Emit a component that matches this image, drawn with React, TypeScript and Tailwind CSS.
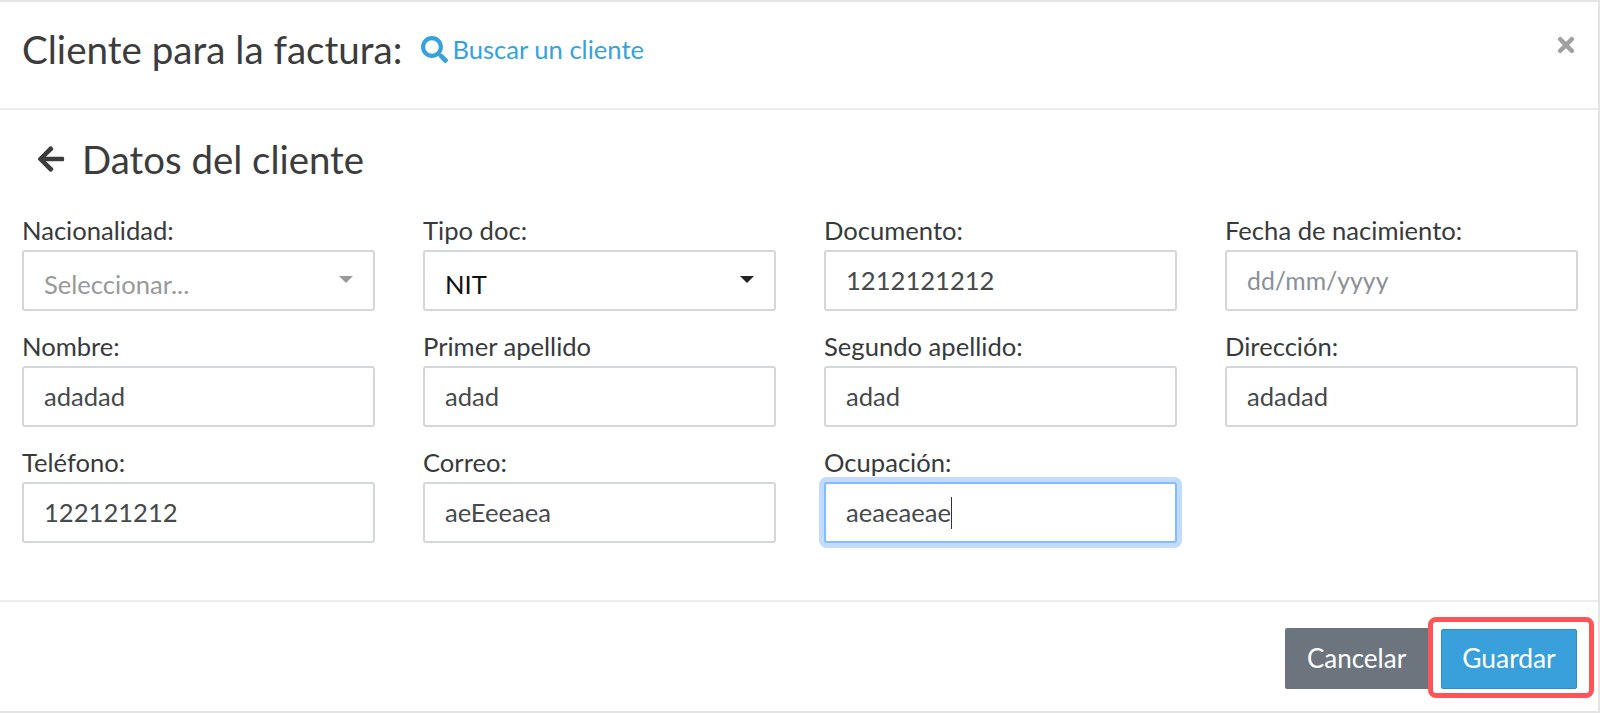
import React from "react";
import { FaSearch, FaArrowLeft, FaTimes } from "react-icons/fa";

function Label({ children }: { children: React.ReactNode }) {
  return <label className="block h-[30px] whitespace-nowrap text-[25.6px] leading-[20px] text-[#373a3c]">{children}</label>;
}

function Field({ label, value, placeholder, focused }: { label: string; value?: string; placeholder?: string; focused?: boolean }) {
  return (
    <div className="h-[116px]">
      <Label>{label}</Label>
      <div
        className={
          focused
            ? "flex h-[61px] items-center rounded-[3px] border-2 border-[#80bdff] bg-white pl-[20px] text-[25.6px] text-[#464a4c] shadow-[0_0_0_5px_#c2dbfe]"
            : "flex h-[61px] items-center rounded-[3px] border-2 border-[#d2d7dc] bg-white pl-[20px] text-[25.6px] text-[#464a4c]"
        }
      >
        {placeholder ? <span className="text-[24.8px] text-[#8a9097]">{placeholder}</span> : <span>{value}</span>}
        {focused ? <span className="h-[32px] w-[1px] bg-[#333]" /> : null}
      </div>
    </div>
  );
}

function SelectField({ label, value, muted }: { label: string; value: string; muted?: boolean }) {
  return (
    <div className="h-[116px]">
      <Label>{label}</Label>
      <div className="flex h-[61px] items-center justify-between rounded-[3px] border-2 border-[#d2d7dc] bg-white pl-[20px] pr-[20px]">
        <span className={muted ? "mt-[8px] text-[25.6px] text-[#999]" : "mt-[8px] text-[25.6px] text-[#111]"}>{value}</span>
        <svg width="14" height="7" viewBox="0 0 14 7" className="mb-[3px]">
          <path d="M0 0H14L7 7Z" fill={muted ? "#999" : "#222"} />
        </svg>
      </div>
    </div>
  );
}

export default function App() {
  return (
    <div className="flex h-[713px] w-[1600px] flex-col border-b-2 border-r-2 border-t-2 border-[#e4e4e4] bg-white font-['Lato','Liberation_Sans',sans-serif]">
      <header className="flex h-[108px] shrink-0 items-start justify-between border-b-2 border-[#e9ecef] pl-[22px] pr-[20px]">
        <div className="mt-[25px] flex items-center">
          <h1 className="text-[38.6px] font-normal leading-[44px] text-[#3c3c3c]">Cliente para la factura:</h1>
          <a className="ml-[19px] flex items-center text-[25.6px] leading-[30px] text-[#36a2dd]">
            <FaSearch className="mr-[4px] text-[27px]" />
            Buscar un cliente
          </a>
        </div>
        <FaTimes className="mt-[31px] text-[24px] text-[#a0a0a0]" />
      </header>

      <main className="h-[492px] shrink-0 border-b-2 border-[#ececec] pl-[22px] pr-[20px]">
        <div className="flex h-[101px] items-center pb-[3px] pl-[14px] text-[38.4px] leading-[44px] text-[#3c3c3c]">
          <FaArrowLeft className="mr-[16px] text-[30px]" />
          Datos del cliente
        </div>
        <div className="grid grid-cols-[353px_353px_353px_353px] gap-x-[48px] pt-[9px]">
          <SelectField label="Nacionalidad:" value="Seleccionar..." muted />
          <SelectField label="Tipo doc:" value="NIT" />
          <Field label="Documento:" value="1212121212" />
          <Field label="Fecha de nacimiento:" placeholder="dd/mm/yyyy" />
          <Field label="Nombre:" value="adadad" />
          <Field label="Primer apellido" value="adad" />
          <Field label="Segundo apellido:" value="adad" />
          <Field label="Dirección:" value="adadad" />
          <Field label="Teléfono:" value="122121212" />
          <Field label="Correo:" value="aeEeeaea" />
          <Field label="Ocupación:" value="aeaeaeae" focused />
        </div>
      </main>

      <footer className="flex flex-1 items-end justify-end pb-[13px] pr-[4px]">
        <button className="mb-[9px] flex h-[61px] w-[143px] items-center justify-center rounded-l-[2px] bg-[#6c757d] text-[26px] text-white">
          Cancelar
        </button>
        <div className="rounded-[8px] border-[5px] border-[#fb5559] pb-[4px] pl-[8px] pr-[12px] pt-[7px]">
          <button className="flex h-[60px] w-[136px] items-center justify-center rounded-[2px] border border-[#2b8fcb] bg-[#3aa0dc] text-[26.4px] text-white">
            Guardar
          </button>
        </div>
      </footer>
    </div>
  );
}
